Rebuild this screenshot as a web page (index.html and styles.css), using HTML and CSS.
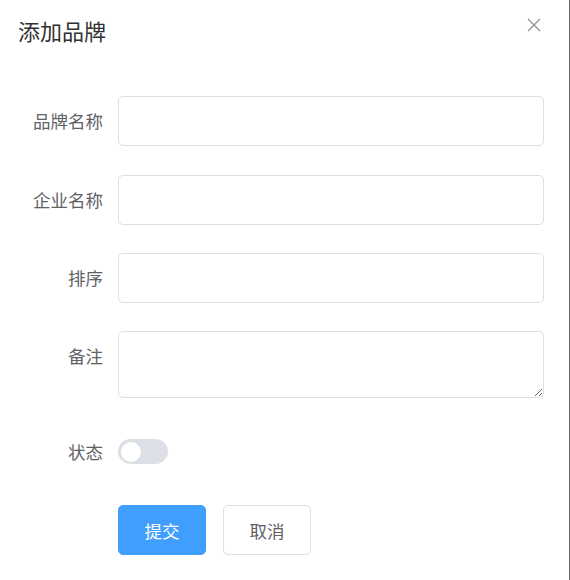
FILE: index.html
```html
<!DOCTYPE html>
<html lang="zh-CN">
<head>
      <meta charset="UTF-8">
      <meta name="viewport" content="width=device-width, initial-scale=1.0">
      <title>添加品牌</title>
      <link rel="stylesheet" href="styles.css">
</head>
<body>
      <div class="dialog">
            <div class="dialog-header">
                  <span class="dialog-title">添加品牌</span>
                  <button class="dialog-close" aria-label="关闭">
                        <svg width="14" height="14" viewBox="0 0 14 14">
                              <path d="M1 1 L13 13 M13 1 L1 13" stroke="#909399" stroke-width="1.3" fill="none"/>
                        </svg>
                  </button>
            </div>
            <div class="dialog-body">
                  <form class="form">
                        <div class="form-item">
                              <label class="form-label">品牌名称</label>
                              <div class="form-content"><input class="input" type="text"></div>
                        </div>
                        <div class="form-item">
                              <label class="form-label">企业名称</label>
                              <div class="form-content"><input class="input" type="text"></div>
                        </div>
                        <div class="form-item">
                              <label class="form-label">排序</label>
                              <div class="form-content"><input class="input" type="text"></div>
                        </div>
                        <div class="form-item form-item-half">
                              <label class="form-label">备注</label>
                              <div class="form-content"><textarea class="textarea" rows="2"></textarea></div>
                        </div>
                        <div class="form-item form-item-half">
                              <label class="form-label">状态</label>
                              <div class="form-content">
                                    <span class="switch"><span class="switch-core"></span></span>
                              </div>
                        </div>
                        <div class="form-item">
                              <label class="form-label"></label>
                              <div class="form-content buttons">
                                    <button type="button" class="btn btn-primary">提交</button>
                                    <button type="button" class="btn">取消</button>
                              </div>
                        </div>
                  </form>
            </div>
      </div>
</body>
</html>
```

FILE: styles.css
```css
*{
      box-sizing: border-box;
}

body{
      margin: 0;
      background: #fff;
      font-family: "Noto Sans CJK SC", "Liberation Sans", sans-serif;
}
.dialog{
      width: 570px;
      height: 580px;
      background: #fff;
      border-right: 1px solid #6b6b6b;
}
.dialog-header{
      position: relative;
      padding: 15px 0 12px 18px;
}
.dialog-title{
      display: block;
      font-size: 22px;
      line-height: 30px;
      color: #303133;
}
.dialog-close{
      position: absolute;
      top: 18px;
      right: 28px;
      width: 14px;
      height: 14px;
      padding: 0;
      border: none;
      background: none;
      cursor: pointer;
}
.dialog-close svg{
      display: block;
}
.dialog-body{
      padding: 39px 25px 0 18px;
}
.form-item{
      display: flex;
      margin-bottom: 28px;
}
.form-item:first-child{
      margin-bottom: 29px;
}
.form-item-half{
      margin-bottom: 28.5px;
}
.form-label{
      width: 100px;
      flex-shrink: 0;
      padding-right: 15px;
      text-align: right;
      font-size: 17.5px;
      line-height: 50px;
      color: #606266;
}
.form-content{
      flex: 1;
      display: flex;
      align-items: center;
      min-height: 50px;
}
.input{
      width: 100%;
      height: 50px;
      border: 1px solid #dcdfe6;
      border-radius: 5px;
      padding: 0 19px;
      font-size: 17.5px;
      color: #606266;
      outline: none;
}
.textarea{
      display: block;
      width: 100%;
      height: 67px;
      border: 1px solid #dcdfe6;
      border-radius: 5px;
      padding: 6px 19px;
      font-size: 17.5px;
      line-height: 1.5;
      color: #606266;
      resize: vertical;
      outline: none;
      font-family: inherit;
}
.switch{
      display: inline-block;
}
.switch-core{
      display: block;
      position: relative;
      width: 50px;
      height: 25px;
      border-radius: 12.5px;
      background: #dcdfe6;
      cursor: pointer;
}
.switch-core::after{
      content: "";
      position: absolute;
      top: 2.5px;
      left: 2.5px;
      width: 20px;
      height: 20px;
      border-radius: 50%;
      background: #fff;
}
.buttons{
      gap: 17px;
}
.btn{
      width: 88px;
      height: 50px;
      border: 1px solid #dcdfe6;
      border-radius: 5px;
      background: #fff;
      color: #606266;
      font-size: 17.5px;
      font-family: inherit;
      cursor: pointer;
}
.btn-primary{
      background: #409eff;
      border-color: #409eff;
      color: #fff;
}
```
